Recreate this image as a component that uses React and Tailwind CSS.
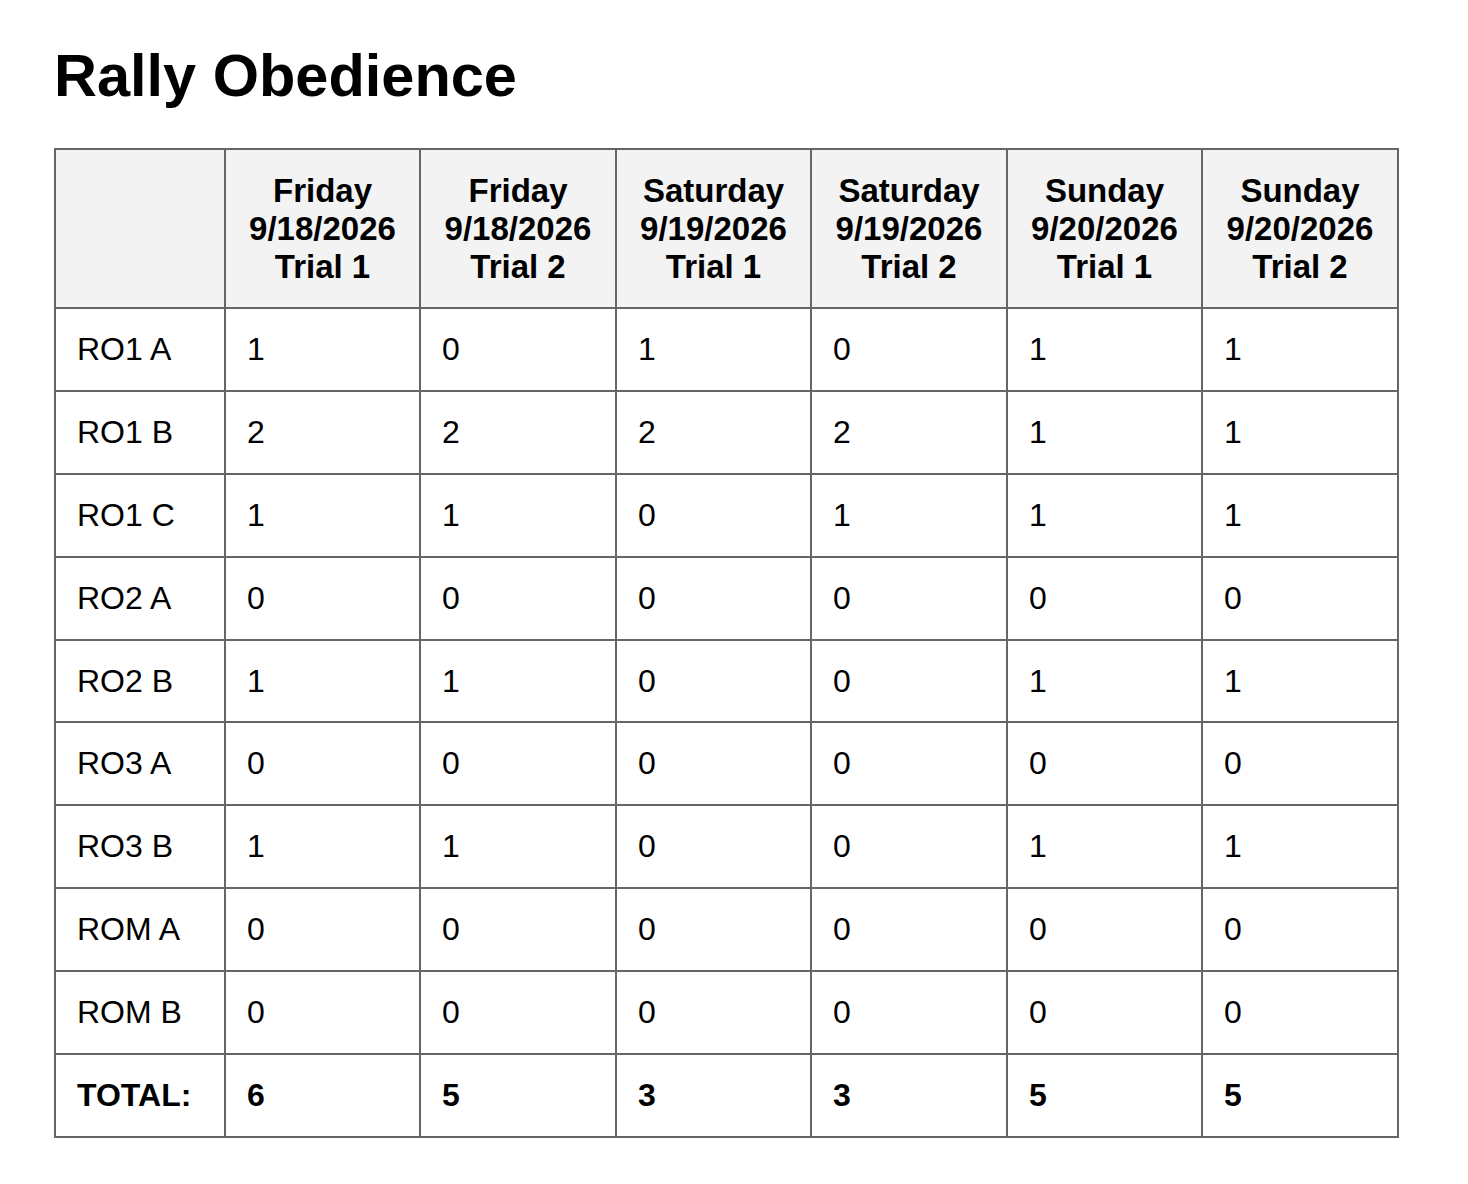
import React from "react";

const cols = [
  ["Friday", "9/18/2026", "Trial 1"],
  ["Friday", "9/18/2026", "Trial 2"],
  ["Saturday", "9/19/2026", "Trial 1"],
  ["Saturday", "9/19/2026", "Trial 2"],
  ["Sunday", "9/20/2026", "Trial 1"],
  ["Sunday", "9/20/2026", "Trial 2"],
];

const rows = [
  ["RO1 A", 1, 0, 1, 0, 1, 1],
  ["RO1 B", 2, 2, 2, 2, 1, 1],
  ["RO1 C", 1, 1, 0, 1, 1, 1],
  ["RO2 A", 0, 0, 0, 0, 0, 0],
  ["RO2 B", 1, 1, 0, 0, 1, 1],
  ["RO3 A", 0, 0, 0, 0, 0, 0],
  ["RO3 B", 1, 1, 0, 0, 1, 1],
  ["ROM A", 0, 0, 0, 0, 0, 0],
  ["ROM B", 0, 0, 0, 0, 0, 0],
];

export default function App() {
  return (
    <div
      className="bg-white text-black min-h-[1184px] pl-[54px] pt-[38px]"
      style={{ fontFamily: '"Liberation Sans", Arial, sans-serif' }}
    >
      <h1 className="text-[59.5px] font-bold leading-[76px] m-0">Rally Obedience</h1>
      <table className="mt-[34px] border-collapse table-fixed w-[1345px]">
        <colgroup>
          <col className="w-[170px]" />
          <col className="w-[195px]" />
          <col className="w-[196px]" />
          <col className="w-[195px]" />
          <col className="w-[196px]" />
          <col className="w-[195px]" />
          <col className="w-[196px]" />
        </colgroup>
        <thead>
          <tr className="bg-[#f3f3f3] h-[159px]">
            <th className="border-2 border-[#666666]"></th>
            {cols.map((c, i) => (
              <th
                key={i}
                className="border-2 border-[#666666] text-center font-bold text-[33px] leading-[38px] p-0"
              >
                {c.map((l, j) => (
                  <div key={j}>{l}</div>
                ))}
              </th>
            ))}
          </tr>
        </thead>
        <tbody>
          {rows.map((r, i) => (
            <tr key={i} className={i === 4 ? "h-[82px]" : "h-[83px]"}>
              {r.map((v, j) => (
                <td
                  key={j}
                  className="border-2 border-[#666666] text-[32px] leading-[37px] pl-[21px] pr-2 text-left"
                >
                  {v}
                </td>
              ))}
            </tr>
          ))}
          <tr className="h-[83px] font-bold">
            {["TOTAL:", 6, 5, 3, 3, 5, 5].map((v, j) => (
              <td
                key={j}
                className="border-2 border-[#666666] text-[32px] leading-[37px] pl-[21px] pr-2 text-left"
              >
                {v}
              </td>
            ))}
          </tr>
        </tbody>
      </table>
    </div>
  );
}
